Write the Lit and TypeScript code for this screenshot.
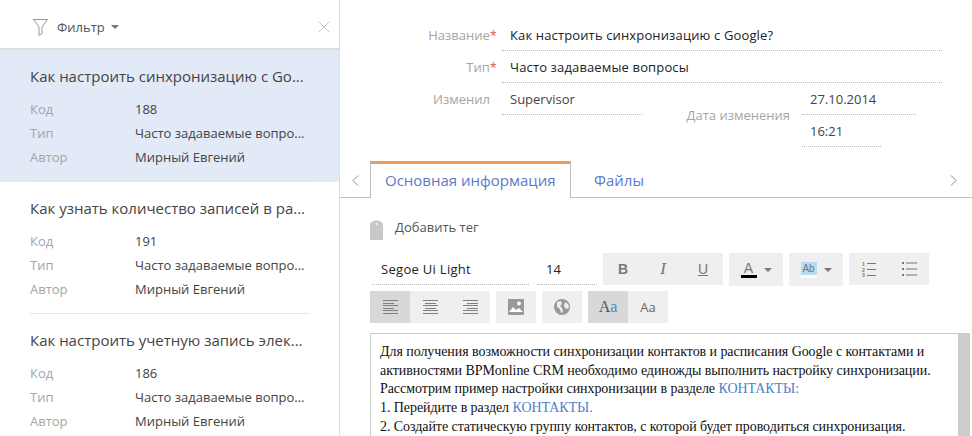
import { html, css, LitElement, svg } from 'lit';
import { customElement } from 'lit/decorators.js';

const records = [
  { title: 'Как настроить синхронизацию с Go...', code: '188', selected: true },
  { title: 'Как узнать количество записей в ра...', code: '191', selected: false },
  { title: 'Как настроить учетную запись элек...', code: '186', selected: false },
];

const alignIcon = (lines: number[][]) => html`<svg width="15" height="14" viewBox="0 0 15 14">
  ${lines.map(([x, w], i) => svg`<rect x=${x} y=${Math.round(i * 2.5)} width=${w} height="1" fill="#808080"></rect>`)}
</svg>`;

@customElement('app-root')
export class AppRoot extends LitElement {
  static styles = css`
    :host {
      display: flex;
      width: 972px;
      height: 436px;
      overflow: hidden;
      background: #fff;
      font-family: 'Open Sans', 'Noto Sans', sans-serif;
      font-size: 13px;
      color: #444;
    }

    /* left list */
    .side {
      flex: none;
      width: 339px;
      border-right: 1px solid #ddd;
    }
    .filter-bar {
      display: flex;
      align-items: center;
      height: 50px;
      padding: 6px 9px 0 33px;
      box-sizing: border-box;
      border-bottom: 2px solid #ddd;
    }
    .filter-bar .name {
      margin-left: 9px;
      color: #555;
    }
    .caret {
      width: 0;
      height: 0;
      margin-left: 6px;
      border: 4px solid transparent;
      border-top: 4px solid #777;
      border-bottom: 0;
    }
    .close { margin-left: auto; }
    .record {
      height: 132px;
      padding: 0 30px;
      box-sizing: border-box;
    }
    .record.selected { background: #e2eaf8; }
    .record::after {
      content: '';
      display: block;
      border-bottom: 1px solid #e4e4e4;
      margin-top: 12px;
    }
    .record h3 {
      margin: 0;
      padding-top: 15px;
      height: 32px;
      font-size: 15px;
      font-weight: 400;
      line-height: 22px;
      color: #444;
      white-space: nowrap;
    }
    .meta {
      display: grid;
      grid-template-columns: 105px 1fr;
      grid-auto-rows: 24px;
      align-items: center;
    }
    .meta span { white-space: nowrap; }
    .meta .k { color: #a5a5a5; }

    /* right card */
    .main { flex: 1; min-width: 0; }
    .form {
      display: grid;
      grid-template-columns: 162px 140px 160px 114px 26px;
      grid-auto-rows: 32px;
      height: 149px;
      padding-top: 19px;
      box-sizing: border-box;
    }
    .lbl {
      text-align: right;
      padding-right: 5px;
      line-height: 32px;
      color: #a5a5a5;
    }
    .lbl.plain { padding-right: 12px; }
    .lbl i { color: #e05a4e; font-style: normal; }
    .val {
      padding-left: 8px;
      line-height: 32px;
      border-bottom: 1px dotted #bbb;
      height: 31px;
      white-space: nowrap;
      color: #444;
    }
    .val.strong {
      color: #222;
      grid-column: 2 / 6;
      letter-spacing: 0.14px;
    }
    .date-lbl {
      grid-column: 3;
      grid-row: 3 / 5;
      align-self: center;
      text-align: right;
      padding-right: 12px;
      color: #a5a5a5;
    }
    .val.date { grid-column: 4; grid-row: 3; }
    .val.time { grid-column: 4; grid-row: 4; margin-right: 35px; }

    .tabs {
      display: flex;
      height: 36px;
      margin-top: 12px;
      border-bottom: 1px solid #bbbec4;
    }
    .chev {
      width: 30px;
      display: flex;
      align-items: center;
      justify-content: center;
      padding-top: 2px;
    }
    .chev.right { margin-left: auto; width: 38px; }
    .tab {
      font-size: 15px;
      line-height: 38px;
      color: #5b79c9;
      padding: 0 23px;
    }
    .tab.active {
      box-sizing: border-box;
      width: 201px;
      height: 37px;
      padding: 0 14px;
      line-height: 32px;
      border: 1px solid #bbbec4;
      border-top: 3px solid #ee9a58;
      border-bottom: 0;
      background: #fff;
    }

    .body { padding: 0 0 0 30px; }
    .tag {
      display: flex;
      align-items: center;
      height: 20px;
      margin-top: 22px;
      gap: 12px;
      color: #555;
    }
    .tag span { padding-bottom: 6px; }
    .toolbar {
      display: flex;
      margin-top: 13px;
      height: 33px;
    }
    .toolbar.second { margin-top: 5px; }
    .pick {
      height: 32px;
      border-bottom: 1px dotted #bbb;
      line-height: 32px;
      padding-left: 9px;
      box-sizing: border-box;
      color: #222;
    }
    .pick.font { width: 157px; margin-left: 2px; margin-right: 8px; letter-spacing: 0.3px; }
    .pick.size { width: 60px; margin-right: 6px; }
    .group {
      display: flex;
      background: #efefef;
      height: 32px;
      margin-right: 6px;
    }
    .group.tall { height: 33px; }
    .btn {
      width: 40px;
      display: flex;
      align-items: center;
      justify-content: center;
      box-sizing: border-box;
      color: #777;
    }
    .btn.on { background: #d8d8d8; }
    .btn.wide { width: 54px; gap: 7px; }
    .b { font-weight: 700; font-family: 'Liberation Sans', sans-serif; font-size: 14px; }
    .i { font-style: italic; font-family: 'Liberation Serif', serif; font-size: 17px; }
    .u { text-decoration: underline; font-family: 'Liberation Sans', sans-serif; font-size: 14px; }
    .color-a {
      font-family: 'Liberation Sans', sans-serif;
      font-size: 14px;
      line-height: 13px;
      width: 16px;
      text-align: center;
      border-bottom: 3px solid #000;
    }
    .color-b {
      font-family: 'Liberation Sans', sans-serif;
      font-size: 10px;
      line-height: 13px;
      width: 16px;
      text-align: center;
      background: #b5dcf5;
      border-bottom: 3px solid #fff;
    }
    .caret.small { margin-left: 0; }
    .aa-serif {
      font-family: 'Liberation Serif', serif;
      font-size: 16px;
      color: #556;
    }
    .aa-serif em { font-style: normal; color: #3f93c9; }
    .aa-thin { font-size: 13px; color: #666; }

    .editor {
      display: flex;
      width: 600px;
      height: 110px;
      margin-top: 9px;
      box-sizing: border-box;
      border: 1px solid #ccc;
      border-bottom: 0;
    }
    .text {
      flex: 1;
      padding: 9px 0 0 9px;
      font-family: 'Liberation Serif', serif;
      font-size: 14px;
      line-height: 18.7px;
      letter-spacing: -0.065px;
      color: #111;
      white-space: nowrap;
    }
    .text a { color: #4f81c7; }
    .scroll { width: 11px; background: #ccc; }
    .num { font: 700 5px 'Liberation Sans', sans-serif; fill: #777; }
  `;

  renderRecord(r: { title: string; code: string; selected: boolean }) {
    return html`<div class="record ${r.selected ? 'selected' : ''}">
      <h3>${r.title}</h3>
      <div class="meta">
        <span class="k">Код</span><span>${r.code}</span>
        <span class="k">Тип</span><span>Часто задаваемые вопро...</span>
        <span class="k">Автор</span><span>Мирный Евгений</span>
      </div>
    </div>`;
  }

  render() {
    return html`
      <div class="side">
        <div class="filter-bar">
          <svg width="15" height="17" viewBox="0 0 15 17" fill="none" stroke="#8b97a3">
            <path d="M.5.5h14L9 8v6.500L6 16.500V8z"></path>
          </svg>
          <span class="name">Фильтр</span>
          <span class="caret"></span>
          <svg class="close" width="12" height="12" viewBox="0 0 12 12" stroke="#c4c4c4" fill="none">
            <path d="M.5.5l11 11M11.5.5l-11 11"></path>
          </svg>
        </div>
        ${records.map((r) => this.renderRecord(r))}
      </div>

      <div class="main">
        <div class="form">
          <div class="lbl">Название<i>*</i></div>
          <div class="val strong">Как настроить синхронизацию с Google?</div>
          <div class="lbl">Тип<i>*</i></div>
          <div class="val strong">Часто задаваемые вопросы</div>
          <div class="lbl plain">Изменил</div>
          <div class="val">Supervisor</div>
          <div class="date-lbl">Дата изменения</div>
          <div class="val date">27.10.2014</div>
          <div class="val time">16:21</div>
        </div>

        <div class="tabs">
          <div class="chev">
            <svg width="7" height="11" viewBox="0 0 7 11" fill="none" stroke="#888"><path d="M6 .5l-5 5 5 5"></path></svg>
          </div>
          <div class="tab active">Основная информация</div>
          <div class="tab">Файлы</div>
          <div class="chev right">
            <svg width="7" height="11" viewBox="0 0 7 11" fill="none" stroke="#888"><path d="M1 .5l5 5-5 5"></path></svg>
          </div>
        </div>

        <div class="body">
          <div class="tag">
            <svg width="13" height="20" viewBox="0 0 13 20">
              <path d="M0 4q0-1 2-2l2-1.500h5L11 2q2 1 2 2v16H0z" fill="#c8c8c8"></path>
              <circle cx="6.500" cy="4" r="1" fill="#fff"></circle>
            </svg>
            <span>Добавить тег</span>
          </div>

          <div class="toolbar">
            <div class="pick font">Segoe Ui Light</div>
            <div class="pick size">14</div>
            <div class="group">
              <div class="btn b">B</div>
              <div class="btn i">I</div>
              <div class="btn u">U</div>
            </div>
            <div class="group tall">
              <div class="btn wide"><span class="color-a">A</span><span class="caret small"></span></div>
            </div>
            <div class="group tall">
              <div class="btn wide"><span class="color-b">Ab</span><span class="caret small"></span></div>
            </div>
            <div class="group">
              <div class="btn">
                <svg width="16" height="15" viewBox="0 0 16 15" fill="#777">
                  <rect x="6" y="1" width="9" height="1"></rect>
                  <rect x="6" y="7" width="9" height="1"></rect>
                  <rect x="6" y="13" width="9" height="1"></rect>
                  <text class="num" x="1" y="4">1</text>
                  <text class="num" x="1" y="10">2</text>
                  <text class="num" x="1" y="15">3</text>
                </svg>
              </div>
              <div class="btn">
                <svg width="15" height="14" viewBox="0 0 15 14" fill="#777">
                  <rect x="0" y="0" width="2" height="2"></rect>
                  <rect x="4" y="0.500" width="11" height="1"></rect>
                  <rect x="0" y="6" width="2" height="2"></rect>
                  <rect x="4" y="6.500" width="11" height="1"></rect>
                  <rect x="0" y="12" width="2" height="2"></rect>
                  <rect x="4" y="12.500" width="11" height="1"></rect>
                </svg>
              </div>
            </div>
          </div>

          <div class="toolbar second">
            <div class="group">
              <div class="btn on">${alignIcon([[0, 15], [0, 11], [0, 15], [0, 11], [0, 15], [0, 15]])}</div>
              <div class="btn">${alignIcon([[0, 15], [2, 11], [0, 15], [2, 11], [0, 15], [0, 15]])}</div>
              <div class="btn">${alignIcon([[0, 15], [4, 11], [0, 15], [4, 11], [0, 15], [0, 15]])}</div>
            </div>
            <div class="group">
              <div class="btn">
                <svg width="16" height="16" viewBox="0 0 16 16">
                  <rect width="16" height="16" fill="#999"></rect>
                  <path d="M1 13l4-5 3 3 3-2 4 4z" fill="#fff"></path>
                  <circle cx="11" cy="4.500" r="2" fill="#fff"></circle>
                </svg>
              </div>
            </div>
            <div class="group">
              <div class="btn">
                <svg width="16" height="16" viewBox="0 0 16 16">
                  <circle cx="8" cy="8" r="8" fill="#999"></circle>
                  <path d="M3 3l4-1 1 3-2 2 2 2 1 4-2 1-1-4-3-2zM11 3l3 2 1 4-3 1-2-3z" fill="#efefef"></path>
                </svg>
              </div>
            </div>
            <div class="group">
              <div class="btn on aa-serif">A<em>a</em></div>
              <div class="btn aa-thin">Aa</div>
            </div>
          </div>

          <div class="editor">
            <div class="text">
              Для получения возможности синхронизации контактов и расписания Google с контактами и<br />
              активностями BPMonline CRM необходимо единожды выполнить настройку синхронизации.<br />
              Рассмотрим пример настройки синхронизации в разделе <a>КОНТАКТЫ:</a><br />
              1. Перейдите в раздел <a>КОНТАКТЫ.</a><br />
              2. Создайте статическую группу контактов, с которой будет проводиться синхронизация.
            </div>
            <div class="scroll"></div>
          </div>
        </div>
      </div>
    `;
  }
}
